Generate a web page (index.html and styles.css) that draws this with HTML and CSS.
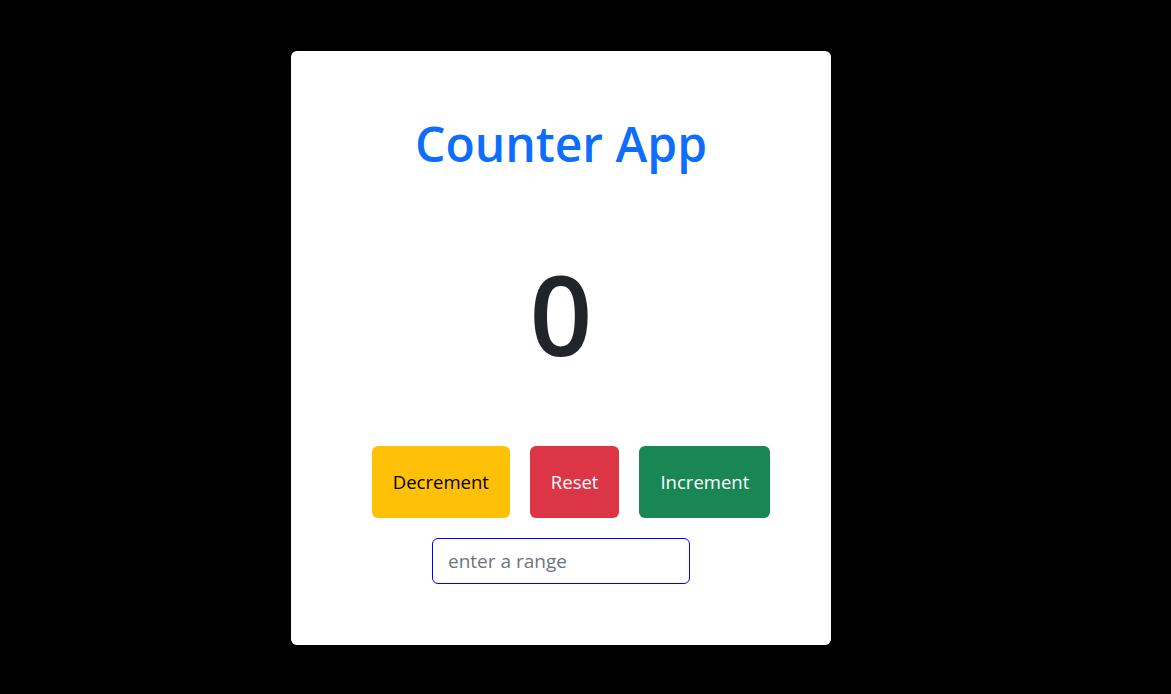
FILE: index.html
```html
<!DOCTYPE html>
<html>
<head>
<meta charset="utf-8">
<link rel="stylesheet" href="styles.css">
</head>
<body>
<div class="page">
  <div class="card">
    <h1 class="title">Counter App</h1>
    <div class="count">0</div>
    <div class="buttons">
      <button class="btn btn-warning">Decrement</button>
      <button class="btn btn-danger">Reset</button>
      <button class="btn btn-success">Increment</button>
    </div>
    <input class="range" type="text" placeholder="enter a range">
  </div>
</div>
</body>
</html>
```
FILE: styles.css
```css
html, body {
  margin: 0;
  background: #000;
  font-family: "Open Sans", "Noto Sans", sans-serif;
}
.page {
  padding: 51px 0 0 291px;
}
.card {
  width: 540px;
  height: 594px;
  box-sizing: border-box;
  background: #fff;
  border-radius: 6px;
  display: flex;
  flex-direction: column;
  align-items: center;
  padding-top: 55px;
}
.title {
  margin: 0;
  font-size: 48px;
  font-weight: 600;
  line-height: 76px;
  color: #0d6efd;
}
.count {
  margin-top: 56px;
  font-size: 110px;
  line-height: 150px;
  color: #212529;
  font-weight: 600;
}
.buttons {
  margin-top: 58px;
  display: flex;
  gap: 20px;
  padding-left: 20px;
}
.btn {
  font-family: inherit;
  font-size: 18.5px;
  line-height: 30px;
  padding: 20px 20px;
  border: 1px solid transparent;
  border-radius: 6px;
  cursor: pointer;
}
.btn-warning { background: #ffc107; color: #000; }
.btn-danger { background: #dc3545; color: #fff; }
.btn-success { background: #198754; color: #fff; }
.range {
  margin-top: 20px;
  width: 258px;
  height: 46px;
  box-sizing: border-box;
  border: 1px solid #0000ff;
  border-radius: 6px;
  padding: 0 15px;
  font-family: inherit;
  font-size: 19px;
  color: #212529;
  outline: none;
}
.range::placeholder { color: #6c757d; }
```
